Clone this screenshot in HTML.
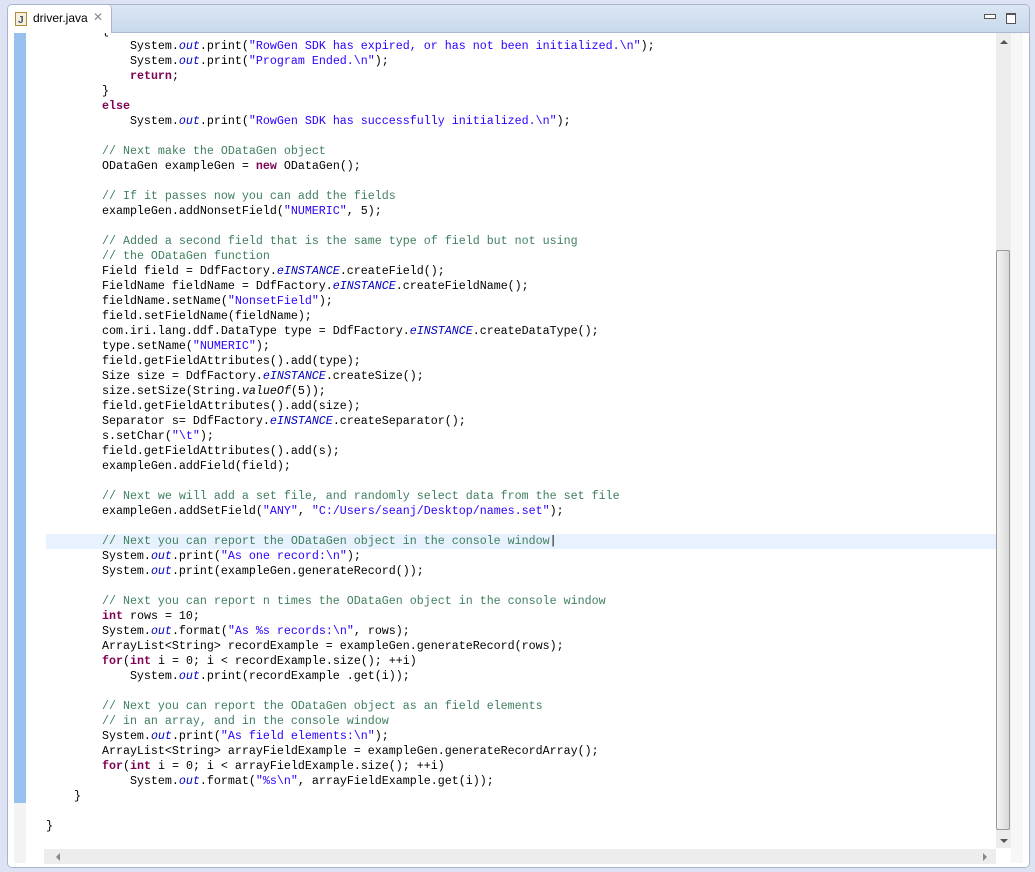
<!DOCTYPE html>
<html><head><meta charset="utf-8"><style>
body{margin:0;width:1035px;height:872px;background:#dde3f3;position:relative;overflow:hidden;font-family:"Liberation Sans",sans-serif}
.win{position:absolute;left:7px;top:4px;width:1023px;height:864px;background:#fff;border:1px solid #a9b4cc;border-radius:5px;box-sizing:border-box;overflow:hidden}
.tabbar{position:absolute;left:0;top:0;right:0;height:27px;background:linear-gradient(#dbe6f3,#c9d9ec);border-bottom:1px solid #a9b9d2}
.tab{position:absolute;left:0;top:0;width:103px;height:28px;background:#fff;border-right:1px solid #a9b4cc;border-radius:4px 4px 0 0;font-size:12px;color:#000}
.ed{position:absolute;left:0;top:28px;right:0;bottom:0;background:#fff;overflow:hidden}
.ruler{position:absolute;left:6px;top:0;width:12px;height:770px;background:#98c0ee}
.ruler2{position:absolute;left:6px;top:770px;width:12px;height:60px;background:#f3f3f3}
pre{position:absolute;left:38px;top:-9.5px;margin:0;font-family:"Liberation Mono",monospace;font-size:11.67px;line-height:15px;color:#000}
.k{color:#7f0055;font-weight:bold}.s{color:#2a00ff}.c{color:#3f7f5f}.f{color:#0000c0;font-style:italic}
.hl{position:absolute;left:38px;top:501px;width:950px;height:15px;background:#e8f2fe}
.vs{position:absolute;left:988px;top:0;width:15px;height:815px;background:#ededed}
.thumb{position:absolute;left:988px;top:217px;width:14px;height:580px;border:1px solid #999;border-radius:2px;box-sizing:border-box;background:linear-gradient(90deg,#f4f4f4,#d8d8d8)}
.ov{position:absolute;left:1003px;top:0;width:12px;height:830px;background:#f7f7f7}
.hs{position:absolute;left:36px;top:816px;width:952px;height:15px;background:#ededed}
</style></head><body>
<div class="win">
<div class="tabbar"></div>
<div class="tab"><svg width="12" height="14" style="position:absolute;left:7px;top:7px"><rect x="0.5" y="0.5" width="11" height="13" fill="#f9f1d7" stroke="#b08a3e"/><text x="3" y="11" font-size="10" font-family="Liberation Sans" fill="#3a4f7a" font-weight="bold">J</text></svg><span style="position:absolute;left:25px;top:6px">driver.java</span><span style="position:absolute;left:85px;top:5px;color:#888;font-size:12px">✕</span></div>
<div style="position:absolute;left:976px;top:9px;width:10px;height:3px;border:1px solid #555;background:#fff"></div>
<div style="position:absolute;left:998px;top:8px;width:8px;height:8px;border:1px solid #555;border-top-width:2px;background:#fff"></div>
<div class="ed">
<div class="ruler"></div><div class="ruler2"></div>
<div class="hl"></div>
<pre>        {
            System.<span class="f">out</span>.print(<span class="s">"RowGen SDK has expired, or has not been initialized.\n"</span>);
            System.<span class="f">out</span>.print(<span class="s">"Program Ended.\n"</span>);
            <span class="k">return</span>;
        }
        <span class="k">else</span>
            System.<span class="f">out</span>.print(<span class="s">"RowGen SDK has successfully initialized.\n"</span>);

        <span class="c">// Next make the ODataGen object</span>
        ODataGen exampleGen = <span class="k">new</span> ODataGen();

        <span class="c">// If it passes now you can add the fields</span>
        exampleGen.addNonsetField(<span class="s">"NUMERIC"</span>, 5);

        <span class="c">// Added a second field that is the same type of field but not using</span>
        <span class="c">// the ODataGen function</span>
        Field field = DdfFactory.<span class="f">eINSTANCE</span>.createField();
        FieldName fieldName = DdfFactory.<span class="f">eINSTANCE</span>.createFieldName();
        fieldName.setName(<span class="s">"NonsetField"</span>);
        field.setFieldName(fieldName);
        com.iri.lang.ddf.DataType type = DdfFactory.<span class="f">eINSTANCE</span>.createDataType();
        type.setName(<span class="s">"NUMERIC"</span>);
        field.getFieldAttributes().add(type);
        Size size = DdfFactory.<span class="f">eINSTANCE</span>.createSize();
        size.setSize(String.<i>valueOf</i>(5));
        field.getFieldAttributes().add(size);
        Separator s= DdfFactory.<span class="f">eINSTANCE</span>.createSeparator();
        s.setChar(<span class="s">"\t"</span>);
        field.getFieldAttributes().add(s);
        exampleGen.addField(field);

        <span class="c">// Next we will add a set file, and randomly select data from the set file</span>
        exampleGen.addSetField(<span class="s">"ANY"</span>, <span class="s">"C:/Users/seanj/Desktop/names.set"</span>);

        <span class="c">// Next you can report the ODataGen object in the console window</span>|
        System.<span class="f">out</span>.print(<span class="s">"As one record:\n"</span>);
        System.<span class="f">out</span>.print(exampleGen.generateRecord());

        <span class="c">// Next you can report n times the ODataGen object in the console window</span>
        <span class="k">int</span> rows = 10;
        System.<span class="f">out</span>.format(<span class="s">"As %s records:\n"</span>, rows);
        ArrayList&lt;String&gt; recordExample = exampleGen.generateRecord(rows);
        <span class="k">for</span>(<span class="k">int</span> i = 0; i &lt; recordExample.size(); ++i)
            System.<span class="f">out</span>.print(recordExample .get(i));

        <span class="c">// Next you can report the ODataGen object as an field elements</span>
        <span class="c">// in an array, and in the console window</span>
        System.<span class="f">out</span>.print(<span class="s">"As field elements:\n"</span>);
        ArrayList&lt;String&gt; arrayFieldExample = exampleGen.generateRecordArray();
        <span class="k">for</span>(<span class="k">int</span> i = 0; i &lt; arrayFieldExample.size(); ++i)
            System.<span class="f">out</span>.format(<span class="s">"%s\n"</span>, arrayFieldExample.get(i));
    }

}</pre>
<div class="vs"></div>
<div style="position:absolute;left:992px;top:7px;width:0;height:0;border-left:4px solid transparent;border-right:4px solid transparent;border-bottom:4px solid #555"></div>
<div class="thumb"></div>
<div style="position:absolute;left:992px;top:806px;width:0;height:0;border-left:4px solid transparent;border-right:4px solid transparent;border-top:4px solid #555"></div>
<div class="ov"></div>
<div class="hs"></div>
<div style="position:absolute;left:48px;top:820px;width:0;height:0;border-top:4px solid transparent;border-bottom:4px solid transparent;border-right:4px solid #888"></div>
<div style="position:absolute;left:975px;top:820px;width:0;height:0;border-top:4px solid transparent;border-bottom:4px solid transparent;border-left:4px solid #888"></div>
</div>
</div>
</body></html>
